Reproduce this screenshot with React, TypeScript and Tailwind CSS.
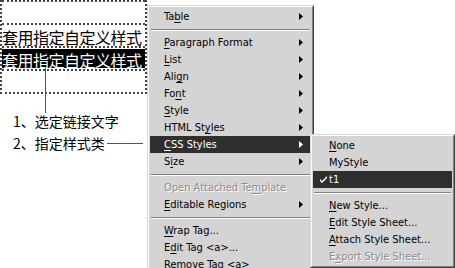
type Item =
  | {
      label: string;
      u?: number;
      arrow?: boolean;
      active?: boolean;
      disabled?: boolean;
      check?: boolean;
    }
  | "sep";

const MAIN_MENU: Item[] = [
  { label: "Table", u: 2, arrow: true },
  "sep",
  { label: "Paragraph Format", u: 0, arrow: true },
  { label: "List", u: 0, arrow: true },
  { label: "Align", u: 3, arrow: true },
  { label: "Font", u: 2, arrow: true },
  { label: "Style", u: 0, arrow: true },
  { label: "HTML Styles", u: 7, arrow: true },
  { label: "CSS Styles", u: 0, arrow: true, active: true },
  { label: "Size", u: 1, arrow: true },
  "sep",
  { label: "Open Attached Template", u: 16, disabled: true },
  { label: "Editable Regions", u: 0, arrow: true },
  "sep",
  { label: "Wrap Tag...", u: 0 },
  { label: "Edit Tag <a>...", u: 1 },
  { label: "Remove Tag <a>", u: 0 },
];

const CSS_MENU: Item[] = [
  { label: "None", u: 0 },
  { label: "MyStyle" },
  { label: "t1", active: true, check: true },
  "sep",
  { label: "New Style...", u: 0 },
  { label: "Edit Style Sheet...", u: 0 },
  { label: "Attach Style Sheet...", u: 0 },
  { label: "Export Style Sheet...", u: 1, disabled: true },
];

const Label = ({ text, u }: { text: string; u?: number }) => {
  if (u === undefined) return <>{text}</>;
  return (
    <>
      {text.slice(0, u)}
      <span className="underline decoration-1 underline-offset-[2px]">{text[u]}</span>
      {text.slice(u + 1)}
    </>
  );
};

const Arrow = ({ light }: { light?: boolean }) => (
  <svg width="4" height="7" viewBox="0 0 4 7" className="absolute right-[8px] top-[5px]">
    <path d="M0 0 L4 3.5 L0 7 Z" fill={light ? "#ffffff" : "#000000"} />
  </svg>
);

const Check = ({ light }: { light?: boolean }) => (
  <svg width="7" height="7" viewBox="0 0 7 7" className="absolute left-[7px] top-[5px]">
    <path
      d="M0 3 L0 5 L2 7 L7 2 L7 0 L2 5 Z"
      fill={light ? "#ffffff" : "#000000"}
    />
  </svg>
);

const Menu = ({ items, textLeft }: { items: Item[]; textLeft: string }) => (
  <div className="border border-t-[#d8d8d8] border-l-[#d8d8d8] border-r-[#404040] border-b-[#404040] bg-[#d4d4d4]">
    <div className="border border-t-white border-l-white border-r-[#808080] border-b-[#808080] p-px">
      {items.map((item, i) => {
        if (item === "sep")
          return (
            <div key={i} className="h-[9px] flex flex-col justify-center px-px">
              <div className="h-px bg-[#808080]" />
              <div className="h-px bg-white" />
            </div>
          );
        const color = item.active
          ? "bg-[#2f2f2f] text-white"
          : item.disabled
          ? "text-[#8c8c8c] [text-shadow:1px_1px_0_#ffffff]"
          : "text-black";
        return (
          <div
            key={i}
            className={`relative h-[17px] leading-[17px] whitespace-nowrap ${textLeft} ${color}`}
          >
            {item.check && <Check light={item.active} />}
            <Label text={item.label} u={item.u} />
            {item.arrow && <Arrow light={item.active} />}
          </div>
        );
      })}
    </div>
  </div>
);

const Cell = ({ children, dark }: { children?: React.ReactNode; dark?: boolean }) => (
  <div className="border-t-2 border-dotted border-[#444] h-[23px] py-px">
    <div
      className={`h-full leading-[22px] text-[16px] whitespace-nowrap tracking-[-0.5px] ${
        dark ? "bg-black text-white" : "text-black"
      }`}
    >
      {children}
    </div>
  </div>
);

export default function App() {
  return (
    <div className="relative w-[455px] h-[268px] overflow-hidden bg-white font-['Noto_Sans_CJK_SC',sans-serif]">
      <div className="w-[147px] border-r-2 border-b-2 border-l-2 border-dotted border-[#444]">
        <Cell />
        <Cell>套用指定自定义样式</Cell>
        <Cell dark>套用指定自定义样式</Cell>
        <Cell />
      </div>
      <div className="absolute left-[45px] top-[67px] w-px h-[46px] bg-[#555]" />
      <div className="pt-[16px] pl-[13px] text-[14px] leading-[22px] text-black">
        <div>1、选定链接文字</div>
        <div className="flex items-center">
          <span>2、指定样式类</span>
          <div className="ml-[2px] w-[36px] h-px bg-[#555]" />
        </div>
      </div>

      <div className="absolute left-[147px] top-[5px] w-[167px] font-['DejaVu_Sans_Condensed','Liberation_Sans',sans-serif] text-[11px]">
        <Menu items={MAIN_MENU} textLeft="pl-[14px]" />
      </div>
      <div className="absolute left-[310px] top-[134px] w-[145px] font-['DejaVu_Sans_Condensed','Liberation_Sans',sans-serif] text-[11px]">
        <Menu items={CSS_MENU} textLeft="pl-[16px]" />
      </div>
    </div>
  );
}
